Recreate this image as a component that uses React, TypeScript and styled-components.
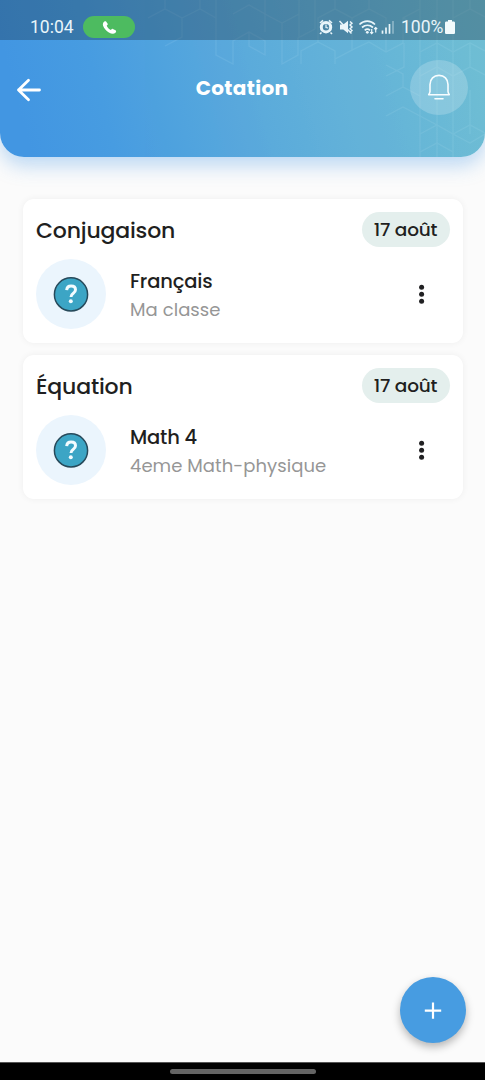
import React from 'react';
import styled, { createGlobalStyle } from 'styled-components';

const GlobalStyle = createGlobalStyle`
  * { box-sizing: border-box; }
  html, body { margin: 0; padding: 0; }
  body {
    background: #fbfbfb;
    color: #1f1f21;
    font-family: Poppins, Inter, "Open Sans", sans-serif;
  }
`;

const Screen = styled.div`
  position: relative;
  display: flex;
  flex-direction: column;
  width: 100%;
  height: 1080px;
  overflow: hidden;
`;

const HeaderFrame = styled.div`
  flex: none;
  border-radius: 0 0 24px 24px;
  box-shadow: 0 8px 20px rgba(66, 150, 230, 0.36);
`;

const Header = styled.header`
  position: relative;
  height: 157.4px;
  overflow: hidden;
  border-radius: 0 0 24px 24px;
  background: linear-gradient(75deg, #4296e2 6%, #479ce1 22%, #5cabdb 52%, #70bfd4 100%);
`;

const Pattern = styled.svg`
  position: absolute;
  inset: 0;
`;

const StatusBar = styled.div`
  position: relative;
  display: flex;
  align-items: center;
  height: 40px;
  padding: 14px 29px 0 30px;
  background: rgba(25, 45, 60, 0.32);
  color: #e9f5fa;
  font: 17.5px Roboto, sans-serif;
`;

const CallPill = styled.span`
  display: flex;
  align-items: center;
  justify-content: center;
  width: 52px;
  height: 22px;
  margin-left: 9px;
  border-radius: 11px;
  background: #4dbb60;
`;

const Clock = styled.span`
  width: 44px;
  white-space: nowrap;
`;

const StatusIcons = styled.div`
  display: flex;
  align-items: center;
  margin-left: auto;
  height: 22px;
`;

const Percent = styled.span`
  width: 43px;
  margin-left: 6px;
  white-space: nowrap;
`;

const AppBar = styled.div`
  position: relative;
  display: grid;
  grid-template-columns: 58px 1fr 58px;
  align-items: center;
  height: 94px;
  padding: 0 17px 0 16px;
`;

const BackButton = styled.button`
  display: flex;
  padding: 5px 0 0;
  border: 0;
  background: none;
`;

const Title = styled.h1`
  margin: 2px 0 0;
  color: #fff;
  font-size: 20px;
  font-weight: 700;
  letter-spacing: 0.35px;
  text-align: center;
`;

const BellButton = styled.button`
  display: flex;
  align-items: center;
  justify-content: center;
  width: 58px;
  height: 55px;
  padding: 0;
  border: 0;
  border-radius: 50%;
  background: rgba(255, 255, 255, 0.2);
`;

const List = styled.main`
  display: flex;
  flex: 1;
  flex-direction: column;
  gap: 12.5px;
  padding: 42px 22.5px 0 23px;
`;

const Card = styled.article`
  height: 143.5px;
  padding: 12px 13px 0;
  border-radius: 11px;
  background: #fff;
  box-shadow: 0 0 7px rgba(0, 0, 0, 0.055);
`;

const CardTop = styled.div`
  display: flex;
  align-items: center;
  justify-content: space-between;
  height: 36px;
`;

const Subject = styled.h2`
  margin: 3px 0 0;
  font-size: 22px;
  font-weight: 500;
  letter-spacing: -0.18px;
`;

const DatePill = styled.span`
  display: flex;
  align-items: center;
  justify-content: center;
  width: 88px;
  height: 35px;
  border-radius: 18px;
  background: #e4efed;
  font-size: 18.5px;
  font-weight: 500;
  letter-spacing: -0.2px;
`;

const CardBody = styled.div`
  display: flex;
  align-items: center;
  height: 70px;
  margin-top: 12px;
`;

const Avatar = styled.div`
  display: flex;
  align-items: center;
  justify-content: center;
  width: 70px;
  height: 70px;
  border-radius: 50%;
  background: #ebf5fd;
`;

const Details = styled.div`
  flex: 1;
  margin-left: 24px;
  padding-top: 3px;
`;

const Name = styled.div`
  font-size: 19.5px;
  font-weight: 500;
  line-height: 29px;
  letter-spacing: -0.18px;
`;

const Group = styled.div`
  color: #969696;
  font-size: 18px;
  font-weight: 400;
  line-height: 28px;
  letter-spacing: 0.06px;
`;

const MoreButton = styled.button`
  display: flex;
  width: 8px;
  margin-right: 24px;
  padding: 0;
  border: 0;
  background: none;
`;

const AddButton = styled.button`
  position: absolute;
  right: 19px;
  bottom: 37px;
  display: flex;
  align-items: center;
  justify-content: center;
  width: 66px;
  height: 66px;
  padding: 0;
  border: 0;
  border-radius: 50%;
  background: #479ce1;
  box-shadow: 0 4px 8px rgba(0, 0, 0, 0.28);
`;

const NavBar = styled.footer`
  display: flex;
  align-items: center;
  justify-content: center;
  flex: none;
  height: 18px;
  border-top: 1px solid #555;
  background: #000;
`;

const NavHandle = styled.span`
  width: 146px;
  height: 5px;
  border-radius: 3px;
  background: #646464;
`;

const HexPattern = () => (
  <Pattern width="485" height="158" fill="none" stroke="#d8f5ff" strokeWidth="1.3" aria-hidden="true">
    <g opacity=".09">
      <path d="M148 18l17-9 17 9v19l-17 9M165 9V0M182 18l18-9 16 9M200 9V0" />
      <path d="M216 0v55l17 9V41l16-9 16 9v14l-16-9v-14M233 14l16-9 16 9v18" />
      <path d="M265 0v14l17 9 17-9V0M282 23v41l16-9V38l17-9M299 38V14M315 0v29" />
      <path d="M301 64V51l17-9 17 9v13M318 42V18l17-9 17 9v32l-17 9M335 9V0" />
      <path d="M352 18l17-9 17 9v34M369 9V0M352 50l17-8 17 10 17-9V18l17-9" />
      <path d="M386 76l18-9V43M386 96l17-9 17 9M403 87V74l-17-9M386 116l17-9 17 9" />
      <path d="M420 0v157M437 0v157M453 0v157M420 52l17-9 16 9 17-9 15 8" />
      <path d="M420 76l17-9 16 9 17-9 15 8M470 43v24M470 90v44" />
      <path d="M420 134l17-9 16 9 17-9 15 8M437 125l-17-9M453 134l17 9 15-9M420 152l17-9 16 9" />
      <path d="M453 18l17-9 15 8M470 9V0M403 18l17 9 17-9" />
    </g>
  </Pattern>
);

const PhoneIcon = () => (
  <svg width="15" height="15" viewBox="0 0 14 14">
    <path d="M1.3 2.3C2 1.1 3 .8 3.8 1.3l1.500 2.200c.3.6-.1 1-.9 1.800.7 1.800 2 3.100 3.900 4 .8-1 1.300-1.300 1.900-1l2.400 1.200c.9.7.7 1.700-.1 2.500-1.500 1.300-3.600 1.100-6.100-.4C3.500 9.800 1.800 7.600 1 5.300c-.3-1.200-.2-2.100.3-3z" fill="#fff" />
  </svg>
);

const DeviceIcons = () => (
  <svg width="76" height="18" viewBox="0 0 76 18" fill="none" stroke="#e9f5fa">
    <path d="M1 5l3-2.600M10 2.400L13 5M2.500 14.500L1 16M11.500 14.500L13 16" strokeWidth="1.600" />
    <circle cx="7" cy="9.200" r="4.700" strokeWidth="3" />
    <path d="M7 6.500v3l2.200.5" strokeWidth="1.200" />
    <path d="M21 6.500h3.300L29 2.800v12.400l-4.700-3.700H21z" fill="#e9f5fa" stroke="none" />
    <path d="M20.500 3l12 12.500" strokeWidth="1.500" />
    <path d="M31 3.500l2 1.800-2 1.800 2 1.800-2 1.800 2 1.800-2 1.800" strokeWidth="1.400" />
    <path d="M40.500 6.500c4.500-4.500 11-4.500 15.500 0M43 9.500c3.300-3 7.700-3 11 0M45.700 12.300c1.700-1.500 3.700-1.500 5.300 0" strokeWidth="1.700" />
    <circle cx="48.300" cy="14.300" r="1.400" fill="#e9f5fa" stroke="none" />
    <path d="M52.700 11v4.500M51.200 14.200l1.500 1.500 1.500-1.500M56.700 14.500V9.500M55.200 11l1.500-1.500 1.500 1.500" strokeWidth="1.200" />
    <path d="M63.500 12.500v3.300M67 9.500v6.300M70.500 6v9.800" strokeWidth="1.700" />
    <path d="M74 3v12.800" strokeWidth="1.700" opacity=".4" />
  </svg>
);

const BatteryIcon = () => (
  <svg width="12" height="16" viewBox="0 0 12 16">
    <path d="M4 1h4v1.500h1.500c1 0 1.500.5 1.500 1.500v9.500c0 1-.5 1.500-1.500 1.500h-7C1.500 15 1 14.500 1 13.500V4c0-1 .5-1.500 1.500-1.500H4z" fill="#f1fafc" />
  </svg>
);

const BackIcon = () => (
  <svg width="27" height="24" viewBox="0 0 27 24" fill="none" stroke="#fff" strokeWidth="2.800" strokeLinecap="round" strokeLinejoin="round">
    <path d="M23.500 12H2.500M12.500 2.200L2.500 12l10 9.800" />
  </svg>
);

const BellIcon = () => (
  <svg width="26" height="28" viewBox="0 0 26 28" fill="none" stroke="#f7fdff" strokeWidth="1.600" strokeLinecap="round" strokeLinejoin="round">
    <path d="M4 18.500V11.500C4 5.800 7.800 2.400 13 2.400S22 5.800 22 11.500v7c.1 1.300.6 2.200 1.300 3.200H2.700c.7-1 1.200-1.900 1.300-3.200zM9 25.800h8" />
  </svg>
);

const QuestionIcon = () => (
  <svg width="36" height="36" viewBox="0 0 36 36" fill="none">
    <circle cx="18" cy="18.400" r="16.600" fill="#3ca5c5" stroke="#26495a" strokeWidth="1.500" />
    <path d="M13.700 14.200c.2-2.700 1.800-4.100 4.400-4.100 2.700 0 4.400 1.400 4.400 3.700 0 1.800-.9 2.700-2.400 3.700-1.500 1-2.100 1.700-2.100 3.500" stroke="#f3fcff" strokeWidth="3" />
    <circle cx="17.800" cy="25.200" r="2" fill="#f3fcff" />
  </svg>
);

const MoreIcon = () => (
  <svg width="8" height="22" viewBox="0 0 8 22" fill="#202022">
    <circle cx="3.600" cy="4.200" r="2.500" />
    <circle cx="3.600" cy="11.200" r="2.500" />
    <circle cx="3.600" cy="18.200" r="2.500" />
  </svg>
);

const PlusIcon = () => (
  <svg width="18" height="20" viewBox="0 0 18 20" stroke="#fff" strokeWidth="2.200">
    <path d="M.8 10.600h16.400M9 2.400v16.400" />
  </svg>
);

const courses = [
  { subject: 'Conjugaison', date: '17 août', name: 'Français', group: 'Ma classe' },
  { subject: 'Équation', date: '17 août', name: 'Math 4', group: '4eme Math-physique' },
];

export default function App() {
  return (
    <Screen>
      <GlobalStyle />
      <HeaderFrame>
        <Header>
          <HexPattern />
          <StatusBar>
            <Clock>10:04</Clock>
            <CallPill><PhoneIcon /></CallPill>
            <StatusIcons>
              <DeviceIcons />
              <Percent>100%</Percent>
              <BatteryIcon />
            </StatusIcons>
          </StatusBar>
          <AppBar>
            <BackButton aria-label="Retour"><BackIcon /></BackButton>
            <Title>Cotation</Title>
            <BellButton aria-label="Notifications"><BellIcon /></BellButton>
          </AppBar>
        </Header>
      </HeaderFrame>
      <List>
        {courses.map((c) => (
          <Card key={c.subject}>
            <CardTop>
              <Subject>{c.subject}</Subject>
              <DatePill>{c.date}</DatePill>
            </CardTop>
            <CardBody>
              <Avatar><QuestionIcon /></Avatar>
              <Details>
                <Name>{c.name}</Name>
                <Group>{c.group}</Group>
              </Details>
              <MoreButton aria-label="Options"><MoreIcon /></MoreButton>
            </CardBody>
          </Card>
        ))}
      </List>
      <AddButton aria-label="Ajouter"><PlusIcon /></AddButton>
      <NavBar><NavHandle /></NavBar>
    </Screen>
  );
}
